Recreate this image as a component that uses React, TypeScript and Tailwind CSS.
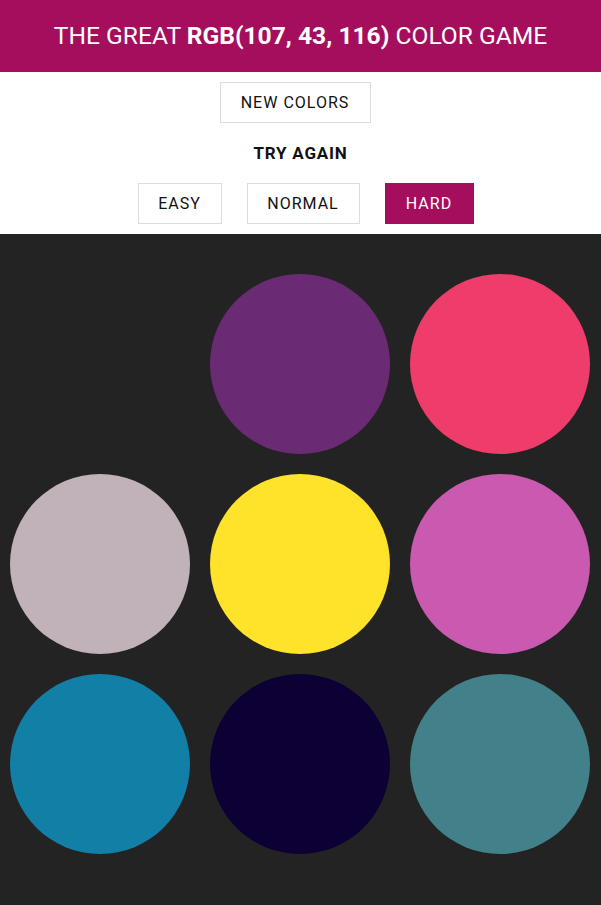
import React from "react";

const colors = [
  null,
  "#6b2b74",
  "#ee3d6a",
  "#c1b1b9",
  "#ffe32b",
  "#c95ab0",
  "#127fa6",
  "#0d0035",
  "#42818a",
];

export default function App() {
  return (
    <div className="min-h-[905px] bg-[#232323]" style={{ fontFamily: "Roboto, 'Liberation Sans', sans-serif" }}>
      <div className="h-[72px] bg-[#a50e5c] flex items-center justify-center text-white text-[24.6px] font-normal">
        <h1>
          THE GREAT <span className="font-bold">RGB(107, 43, 116)</span> COLOR GAME
        </h1>
      </div>
      <div className="bg-white flex flex-col items-center pt-[10px] h-[162px]">
        <button className="h-[41px] w-[151px] mr-[11px] border border-[#dddddd] text-[16px] tracking-[1px] text-[#111]">
          NEW COLORS
        </button>
        <div className="mt-[20px] text-[17px] font-bold tracking-[0.8px] text-[#111] leading-[20px]">TRY AGAIN</div>
        <div className="mt-[20px] flex gap-[25px] ml-[10px]">
          <button className="h-[41px] w-[84px] border border-[#dddddd] text-[16px] tracking-[1px] text-[#111]">EASY</button>
          <button className="h-[41px] w-[113px] border border-[#dddddd] text-[16px] tracking-[1px] text-[#111]">NORMAL</button>
          <button className="h-[41px] w-[89px] bg-[#a50e5c] text-white text-[16px] tracking-[1px]">HARD</button>
        </div>
      </div>
      <div className="grid grid-cols-[200px_200px_200px] pt-[30px]">
        {colors.map((c, i) => (
          <div key={i} className="h-[200px] flex items-center justify-center">
            {c && <div className="w-[180px] h-[180px] rounded-full" style={{ backgroundColor: c }} />}
          </div>
        ))}
      </div>
    </div>
  );
}
